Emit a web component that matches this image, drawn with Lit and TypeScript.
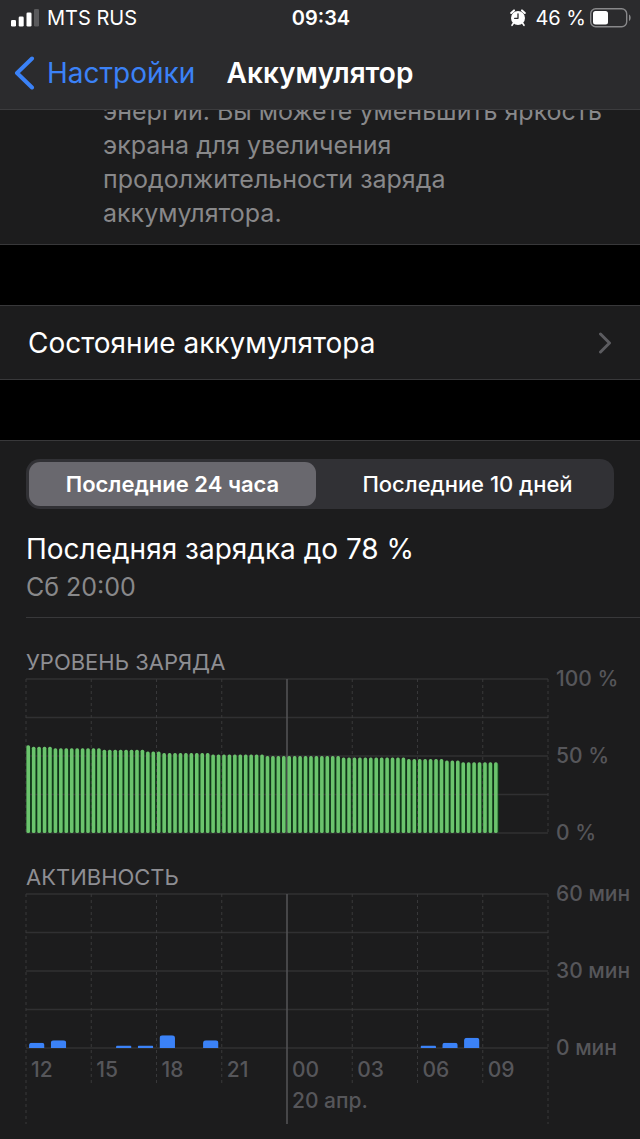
import { LitElement, html, svg, css } from "lit";
import { customElement, state } from "lit/decorators.js";
import { classMap } from "lit/directives/class-map.js";

/* Height of one chart from its 0 line to its top line. */
const PLOT = 154;

/* Battery level in percent, one value for each quarter of an hour: [value, count]. */
const LEVEL_RUNS: [number, number][] = [
  [57, 1], [56, 4], [55, 9], [54, 8], [53, 3], [52, 9],
  [51, 10], [50, 14], [49, 12], [48, 7], [47, 3], [46, 7],
];
const LEVELS = LEVEL_RUNS.flatMap(([value, count]) => Array<number>(count).fill(value));

/* Minutes of screen use, by hour since noon. */
const ACTIVITY: [number, number][] = [
  [0, 2], [1, 3], [4, 1], [5, 1], [6, 5], [8, 3], [18, 1], [19, 2], [20, 4],
];

const HOURS = ["12", "15", "18", "21", "00", "03", "06", "09"];

const share = (part: number, whole: number) => `${(part / whole) * 100}%`;

@customElement("usage-chart")
export class UsageChart extends LitElement {
  static properties = {
    kind: { type: String },
    heading: { type: String },
    scale: { type: Array },
  };

  declare kind: "level" | "activity";
  declare heading: string;
  declare scale: string[];

  static styles = css`
    :host {
      display: block;
    }
    h2 {
      margin: 0;
      font-size: 22px;
      font-weight: 400;
      line-height: 34px;
      color: #8e8e93;
    }
    .chart {
      display: grid;
      grid-template-columns: minmax(0, 1fr) 92px;
      grid-template-rows: 154px auto;
    }
    .plot {
      grid-area: 1 / 1 / 3 / 2;
      display: block;
      width: 100%;
      height: 100%;
      overflow: visible;
    }
    .scale {
      grid-area: 1 / 2;
      display: flex;
      flex-direction: column;
      justify-content: space-between;
      margin: -12px 0;
      padding-left: 8px;
      font-size: 21px;
      font-weight: 500;
      line-height: 24px;
      color: #56565a;
      white-space: nowrap;
    }
    .hours {
      grid-area: 2 / 1;
      display: grid;
      grid-template-columns: repeat(8, minmax(0, 1fr));
      padding-top: 6px;
      height: 70px;
      font-size: 21px;
      font-weight: 500;
      line-height: 31px;
      color: #56565a;
      white-space: nowrap;
    }
    .hour {
      padding-left: 5px;
    }
    .line {
      stroke: #303032;
      stroke-width: 1.5;
    }
    .dash {
      stroke: #38383a;
      stroke-width: 1;
      stroke-dasharray: 3 3;
    }
    .midnight {
      stroke: #555557;
      stroke-width: 1.5;
    }
    .shade {
      fill: #0f3a18;
    }
    .level {
      fill: #6bc46d;
    }
    .use {
      fill: #3b82f7;
    }
  `;

  private bars() {
    if (this.kind === "level") {
      return svg`${LEVELS.map((value, i) => {
        const height = (value / 100) * PLOT;
        return svg`<rect class="level" x=${share(i + 0.08, 96)} y=${PLOT - height}
          width=${share(0.66, 96)} height=${height} rx="1.5"></rect>`;
      })}`;
    }
    return svg`${ACTIVITY.map(([hour, minutes]) => {
      const height = (minutes / 60) * PLOT;
      return svg`<svg x=${share(hour + 0.14, 24)} y=${PLOT - height} width=${share(0.71, 24)} height=${height}>
        <rect class="use" width="100%" height=${height + 6} rx=${Math.min(3, height / 2)}></rect>
      </svg>`;
    })}`;
  }

  private shade() {
    return svg`${LEVELS.map((value, i) => {
      const height = (value / 100) * PLOT - 2;
      return svg`<rect class="shade" x=${share(i, 96)} y=${PLOT - height}
        width=${share(1, 96)} height=${height}></rect>`;
    })}`;
  }

  render() {
    const isLevel = this.kind === "level";
    return html`
      <h2>${this.heading}</h2>
      <div class="chart">
        <svg class="plot" role="img" aria-label=${this.heading}>
          ${isLevel ? this.shade() : null}
          ${[0, 1, 2, 3, 4].map((i) => svg`<line class="line" x1="0" x2="100%"
            y1=${(i * PLOT) / 4} y2=${(i * PLOT) / 4}></line>`)}
          ${[0, 1, 2, 3, 4, 5, 6, 7, 8].map((i) => {
            const end = isLevel ? PLOT : i % 4 === 0 ? PLOT + 76 : PLOT + 38;
            return svg`<line class=${i === 4 ? "midnight" : "dash"}
              x1=${share(i, 8)} x2=${share(i, 8)} y1="0" y2=${end}></line>`;
          })}
          ${this.bars()}
        </svg>
        <div class="scale">${this.scale.map((label) => html`<span>${label}</span>`)}</div>
        ${isLevel
          ? null
          : html`<div class="hours">
              ${HOURS.map((hour) => html`<div class="hour">
                <div>${hour}</div>
                ${hour === "00" ? html`<div>20 апр.</div>` : null}
              </div>`)}
            </div>`}
      </div>
    `;
  }
}

@customElement("app-root")
export class AppRoot extends LitElement {
  @state() private tab = 0;

  static styles = css`
    :host {
      display: block;
      min-height: 100vh;
      background: #1c1c1d;
      color: #ffffff;
      font-family: Inter, "Noto Sans", sans-serif;
    }
    .bar {
      background: #2b2b2d;
      border-bottom: 1px solid #3c3c3e;
    }
    .status {
      display: grid;
      grid-template-columns: 1fr auto 1fr;
      align-items: center;
      height: 36px;
      padding: 0 9px 0 11px;
      font-size: 20px;
      line-height: 24px;
    }
    .side {
      display: flex;
      align-items: center;
      gap: 8px;
    }
    .right {
      justify-content: flex-end;
      gap: 4px;
    }
    .percent {
      padding-left: 5px;
    }
    .time {
      font-weight: 600;
    }
    .nav {
      display: grid;
      grid-template-columns: 1fr auto 1fr;
      align-items: center;
      height: 73px;
      padding: 0 14px;
    }
    .back {
      display: flex;
      align-items: center;
      gap: 12px;
      color: #3b82f7;
      font-size: 28px;
      line-height: 34px;
      text-decoration: none;
    }
    h1 {
      margin: 0;
      font-size: 28px;
      font-weight: 600;
      line-height: 34px;
    }
    .note {
      overflow: hidden;
      padding: 0 26px 14px 103px;
      color: #88888a;
      font-size: 25px;
      line-height: 34px;
    }
    .note p {
      margin: -16px 0 0;
    }
    .gap {
      box-sizing: border-box;
      height: 62px;
      background: #000000;
      border: 1px solid #38383a;
      border-width: 1px 0;
    }
    .row {
      display: flex;
      align-items: center;
      justify-content: space-between;
      height: 73px;
      padding: 0 28px;
      color: inherit;
      font-size: 28px;
      line-height: 34px;
      text-decoration: none;
    }
    .usage {
      padding: 18px 0 14px 26px;
    }
    .tabs {
      display: grid;
      grid-template-columns: 1fr 1fr;
      column-gap: 8px;
      margin-right: 26px;
      padding: 3px;
      border-radius: 14px;
      background: #313135;
    }
    .tab {
      height: 44px;
      margin: 0;
      padding: 0;
      border: 0;
      border-radius: 11px;
      background: transparent;
      color: #ffffff;
      font: inherit;
      font-size: 22px;
      font-weight: 500;
    }
    .selected {
      background: #69686e;
      font-weight: 600;
    }
    .charge {
      padding: 21px 0 11px;
      border-bottom: 1px solid #38383a;
    }
    .charge p {
      margin: 0;
      font-size: 28px;
      line-height: 38px;
    }
    .charge .when {
      color: #88888a;
      font-size: 25px;
    }
    .level-chart,
    .use-chart {
      margin-top: 27px;
    }
  `;

  private tabButton(index: number, label: string) {
    const on = this.tab === index;
    return html`<button
      type="button"
      class=${classMap({ tab: true, selected: on })}
      aria-pressed=${on ? "true" : "false"}
      @click=${() => (this.tab = index)}
    >${label}</button>`;
  }

  render() {
    return html`
      <header class="bar">
        <div class="status">
          <div class="side">
            <svg width="28" height="18" viewBox="0 0 28 18" fill="#ffffff" aria-hidden="true">
              <rect x="0" y="11" width="5" height="6.5" rx="1.3"></rect>
              <rect x="7.7" y="7.500" width="5" height="10" rx="1.3"></rect>
              <rect x="15.500" y="3.500" width="5" height="14" rx="1.3"></rect>
              <rect x="23" y="0" width="5" height="17.5" rx="1.3" fill="#5a5a5c"></rect>
            </svg>
            <span>MTS RUS</span>
          </div>
          <span class="time">09:34</span>
          <div class="side right">
            <svg width="16" height="18" viewBox="0 0 16 18" aria-hidden="true">
              <path d="M1.200 4 4 1.400M14.800 4 12 1.400" stroke="#ffffff" stroke-width="2" stroke-linecap="round"></path>
              <path d="M3.500 14 2 16.300M12.500 14 14 16.300" stroke="#ffffff" stroke-width="1.600" stroke-linecap="round"></path>
              <circle cx="8" cy="9" r="7" fill="#ffffff"></circle>
              <path d="M8 4.800V9.300H4.600" fill="none" stroke="#2b2b2d" stroke-width="1.300"
                stroke-linecap="round" stroke-linejoin="round"></path>
            </svg>
            <span class="percent">46 %</span>
            <svg width="41" height="20" viewBox="0 0 41 20" aria-hidden="true">
              <rect x="0.700" y="0.700" width="36" height="18" rx="5" fill="none" stroke="#88888a" stroke-width="1.400"></rect>
              <rect x="3" y="3" width="15" height="13.400" rx="2.500" fill="#ffffff"></rect>
              <path d="M39 6.500C41.200 7.500 41.200 12 39 13Z" fill="#88888a"></path>
            </svg>
          </div>
        </div>
        <nav class="nav">
          <a class="back" href="#settings">
            <svg width="21" height="34" viewBox="0 0 21 34" aria-hidden="true">
              <path d="M18 2.500 3 17 18 31.500" fill="none" stroke="#3b82f7" stroke-width="4"
                stroke-linecap="round" stroke-linejoin="round"></path>
            </svg>
            <span>Настройки</span>
          </a>
          <h1>Аккумулятор</h1>
          <span></span>
        </nav>
      </header>
      <main>
        <section class="note">
          <p>энергии. Вы можете уменьшить яркость экрана для увеличения продолжительности заряда аккумулятора.</p>
        </section>
        <div class="gap"></div>
        <a class="row" href="#health">
          <span>Состояние аккумулятора</span>
          <svg width="14" height="22" viewBox="0 0 14 22" aria-hidden="true">
            <path d="M2.500 2 11.500 11 2.500 20" fill="none" stroke="#5c5c60" stroke-width="3"
              stroke-linecap="round" stroke-linejoin="round"></path>
          </svg>
        </a>
        <div class="gap"></div>
        <section class="usage">
          <div class="tabs">
            ${this.tabButton(0, "Последние 24 часа")}
            ${this.tabButton(1, "Последние 10 дней")}
          </div>
          <div class="charge">
            <p>Последняя зарядка до 78 %</p>
            <p class="when">Сб 20:00</p>
          </div>
          <usage-chart
            class="level-chart"
            kind="level"
            heading="УРОВЕНЬ ЗАРЯДА"
            .scale=${["100 %", "50 %", "0 %"]}
          ></usage-chart>
          <usage-chart
            class="use-chart"
            kind="activity"
            heading="АКТИВНОСТЬ"
            .scale=${["60 мин", "30 мин", "0 мин"]}
          ></usage-chart>
        </section>
      </main>
    `;
  }
}
